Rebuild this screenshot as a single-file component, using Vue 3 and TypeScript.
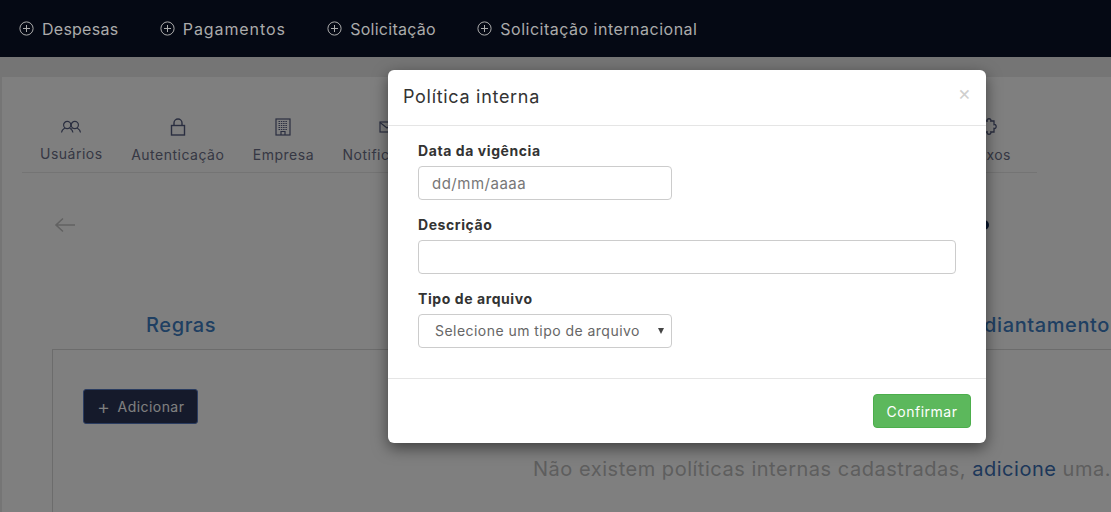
<script setup lang="ts">
const navItems: string[] = ['Despesas', 'Pagamentos', 'Solicitação', 'Solicitação internacional']
</script>

<template>
  <div class="page">
    <header class="nav">
      <a v-for="item in navItems" :key="item" class="nav-item">
        <svg width="15" height="15" viewBox="0 0 15 15" fill="none" stroke="currentColor" stroke-width="1">
          <circle cx="7.5" cy="7.5" r="6.6" />
          <path d="M7.5 4v7M4 7.5h7" />
        </svg>
        <span>{{ item }}</span>
      </a>
    </header>

    <main class="card">
      <nav class="tabs">
        <div class="tab">
          <svg width="22" height="17" viewBox="0 0 22 17" fill="none" stroke="currentColor" stroke-width="1.2">
            <circle cx="7.2" cy="7" r="3.600" /><circle cx="14.800" cy="7" r="3.600" />
            <path d="M1.500 14.500c.3-2 1.500-3.500 3.300-4.600M9.600 9.900c1.800 1.100 3 2.600 3.300 4.600M12.400 9.900l-.9.700M17.200 9.900c1.800 1.100 3 2.600 3.300 4.600" />
          </svg>
          <span>Usuários</span>
        </div>
        <div class="tab">
          <svg width="16" height="18" viewBox="0 0 16 18" fill="none" stroke="currentColor" stroke-width="1.400">
            <rect x="1.500" y="7.500" width="13" height="9.500" /><path d="M4 7.500V5a4 4 0 0 1 8 0v2.500" />
          </svg>
          <span>Autenticação</span>
        </div>
        <div class="tab">
          <svg width="16" height="18" viewBox="0 0 16 18" fill="none" stroke="currentColor" stroke-width="1.200">
            <rect x="1" y="1" width="14" height="16" />
            <path d="M3.500 3.500h9M3.500 5.500h9M3.500 7.500h9M3.500 9.500h9M3.500 11.500h9" stroke-dasharray="1.500 .8" />
            <path d="M6 17v-3.500h4V17" />
          </svg>
          <span>Empresa</span>
        </div>
        <div class="tab">
          <svg width="16" height="18" viewBox="0 0 16 18" fill="none" stroke="currentColor" stroke-width="1.200">
            <rect x="1" y="4" width="14" height="10" /><path d="M1 4.500l7 5.500 7-5.500" />
          </svg>
          <span>Notificações</span>
        </div>
        <div class="tab tab-last">
          <svg width="18" height="18" viewBox="0 0 18 18" fill="none" stroke="currentColor" stroke-width="1.300">
            <path d="M5 3h3.200c-.9-3 4.500-3 3.600 0H15v3.600c2.900-.9 2.900 4.700 0 3.800V14h-3.200c.9 3-4.500 3-3.600 0H5v-3.600c-2.900.9-2.900-4.700 0-3.800V3z" />
          </svg>
          <span>Baixos</span>
        </div>
      </nav>

      <div class="back-row">
        <svg class="back" width="22" height="16" viewBox="0 0 22 16" fill="none" stroke="currentColor" stroke-width="1.600">
          <path d="M21 8H2M9 1.500 2 8l7 6.500" />
        </svg>
        <span class="dot"></span>
      </div>

      <div class="section-tabs">
        <span>Regras</span>
        <span>Adiantamento</span>
      </div>

      <section class="panel">
        <button class="add" type="button"><span class="plus">+</span>Adicionar</button>
        <p class="empty">Não existem políticas internas cadastradas, <a>adicione</a> uma.</p>
      </section>
    </main>

    <div class="overlay"></div>

    <div class="modal">
      <div class="modal-head">
        <h4>Política interna</h4>
        <span class="close">×</span>
      </div>
      <form class="modal-body">
        <label for="d">Data da vigência</label>
        <input id="d" class="short date" type="text" placeholder="dd/mm/aaaa" />
        <label for="e">Descrição</label>
        <input id="e" type="text" />
        <label for="t">Tipo de arquivo</label>
        <div class="select-wrap short">
          <select id="t">
            <option>Selecione um tipo de arquivo</option>
          </select>
        </div>
      </form>
      <div class="modal-foot">
        <button class="confirm" type="button">Confirmar</button>
      </div>
    </div>
  </div>
</template>

<style>
body { margin: 0; }
</style>

<style scoped>
.page {
  position: relative;
  width: 1111px;
  height: 512px;
  overflow: hidden;
  background: #eaeaea;
  font-family: Inter, "Open Sans", sans-serif;
}
.nav {
  position: relative;
  z-index: 2;
  display: flex;
  align-items: center;
  gap: 41.5px;
  height: 57px;
  padding-left: 19px;
  background: #050914;
  color: #ababab;
  font-size: 16px;
  letter-spacing: 0.25px;
}
.nav-item { display: flex; align-items: center; gap: 8px; }
.nav-item:nth-child(2) { letter-spacing: 0.9px; }
.nav-item:nth-child(4) { letter-spacing: 0.5px; }
.card {
  margin: 20px 0 0 2px;
  height: 435px;
  padding-top: 41px;
  background: #fff;
  box-sizing: border-box;
}
.tabs {
  display: flex;
  width: 1015px;
  height: 55px;
  margin-left: 20px;
  padding-left: 18px;
  box-sizing: border-box;
  border-bottom: 1px solid #e8e8e8;
  gap: 28.5px;
  font-size: 14px;
  letter-spacing: 0.5px;
}
.tab { display: flex; flex-direction: column; align-items: center; gap: 10px; color: #6c7088; }
.tab svg { color: #555d80; }
.tab-last { margin-left: auto; margin-right: 26px; }
.back-row {
  display: flex;
  align-items: center;
  justify-content: space-between;
  width: 935px;
  height: 16px;
  margin: 44px 0 0 52px;
}
.back { color: #c4c4c4; }
.dot { width: 10px; height: 10px; border-radius: 50%; background: #0f2a55; }
.section-tabs {
  display: flex;
  justify-content: space-between;
  margin: 80px 0 0 144px;
  padding-right: 1px;
  color: #3f7fc4;
  font-size: 20px;
  font-weight: 500;
  line-height: 24px;
  letter-spacing: 0.6px;
}
.panel {
  margin: 12px 0 0 50px;
  height: 200px;
  padding: 39px 0 0 30px;
  box-sizing: border-box;
  border-top: 1px solid #d8d8d8;
  border-left: 1px solid #d8d8d8;
}
.add {
  display: flex;
  align-items: center;
  gap: 7px;
  width: 115px;
  height: 35px;
  padding: 0 0 0 13px;
  box-sizing: border-box;
  background: #2a3456;
  border: 1px solid #5578c0;
  border-radius: 3px;
  color: #fff;
  font: 14px Inter, sans-serif;
  letter-spacing: 0.45px;
}
.plus { font-size: 20px; font-weight: 300; line-height: 20px; }
.empty {
  margin: 33px 0 0;
  text-align: right;
  color: #bcbcbc;
  font-size: 20px;
  line-height: 24px;
  letter-spacing: 0.52px;
}
.empty a { color: #3a6fb5; }
.overlay {
  position: absolute;
  inset: 0;
  z-index: 1;
  background: rgba(0, 0, 0, 0.5);
}
.modal {
  position: absolute;
  z-index: 3;
  top: 70px;
  left: 388px;
  width: 598px;
  background: #fff;
  border-radius: 6px;
  box-shadow: 0 5px 15px rgba(0, 0, 0, 0.5);
}
.modal-head {
  display: flex;
  align-items: center;
  justify-content: space-between;
  height: 55px;
  padding: 0 15px;
  border-bottom: 1px solid #e5e5e5;
}
h4 {
  margin: -2px 0 0;
  color: #333;
  font-size: 18px;
  font-weight: 400;
  letter-spacing: 0.7px;
}
.close { margin: -10px 0 0 0; color: #cfcfcf; font-size: 20px; font-weight: 400; }
.modal-body {
  display: flex;
  flex-direction: column;
  align-items: flex-start;
  height: 252px;
  padding: 15px 30px 0;
  box-sizing: border-box;
}
label {
  height: 20px;
  margin: 0 0 5px;
  color: #333;
  font-size: 14px;
  font-weight: 700;
  line-height: 20px;
  letter-spacing: 0.58px;
}
input, select {
  display: block;
  width: 100%;
  height: 34px;
  box-sizing: border-box;
  background: #fff;
  border: 1px solid #ccc;
  border-radius: 4px;
  color: #555;
  font: 14px Inter, sans-serif;
  outline: none;
}
input { margin-bottom: 15px; padding: 0 13px; }
input::placeholder { color: #777; }
.date { font-size: 15px; letter-spacing: 0.5px; }
select {
  appearance: none;
  padding: 0 24px 2px 16px;
  color: #666;
  letter-spacing: 0.46px;
}
.select-wrap { position: relative; }
.select-wrap::after {
  content: "";
  position: absolute;
  top: 14px;
  right: 8px;
  border-top: 6px solid #444;
  border-left: 3px solid transparent;
  border-right: 3px solid transparent;
  pointer-events: none;
}
.short { width: 254px; }
.modal-foot {
  display: flex;
  justify-content: flex-end;
  height: 65px;
  padding: 15px;
  box-sizing: border-box;
  border-top: 1px solid #e5e5e5;
}
.confirm {
  width: 98px;
  height: 34px;
  background: #5cb85c;
  border: 1px solid #4cae4c;
  border-radius: 4px;
  color: #fff;
  font: 14px Inter, sans-serif;
  letter-spacing: 0.5px;
}
</style>
